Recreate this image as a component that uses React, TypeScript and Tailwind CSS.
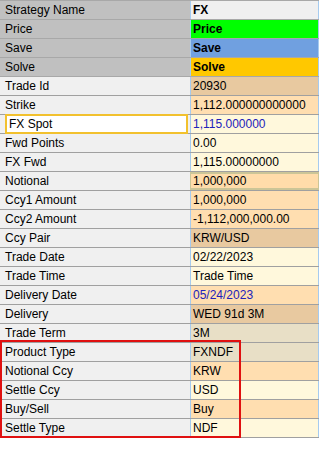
import React from 'react';

interface Row {
  label: string;
  value: string;
  bg: string;
  header?: boolean;
  bold?: boolean;
  blue?: boolean;
  focus?: boolean;
  edit?: boolean;
}

const ROWS: Row[] = [
  { label: 'Strategy Name', value: 'FX', bg: 'bg-[#f0f0f0]', header: true, bold: true },
  { label: 'Price', value: 'Price', bg: 'bg-[#00ff00]', header: true, bold: true },
  { label: 'Save', value: 'Save', bg: 'bg-[#70a0e0]', header: true, bold: true },
  { label: 'Solve', value: 'Solve', bg: 'bg-[#ffc800]', header: true, bold: true },
  { label: 'Trade Id', value: '20930', bg: 'bg-[#e8c9a0]' },
  { label: 'Strike', value: '1,112.000000000000', bg: 'bg-[#ffdeb0]' },
  { label: 'FX Spot', value: '1,115.000000', bg: 'bg-[#fff8dc]', blue: true, focus: true },
  { label: 'Fwd Points', value: '0.00', bg: 'bg-[#fff8dc]' },
  { label: 'FX Fwd', value: '1,115.00000000', bg: 'bg-[#fff8dc]' },
  { label: 'Notional', value: '1,000,000', bg: 'bg-[#ffdcaa]', edit: true },
  { label: 'Ccy1 Amount', value: '1,000,000', bg: 'bg-[#ffdeb0]' },
  { label: 'Ccy2 Amount', value: '-1,112,000,000.00', bg: 'bg-[#ffdeb0]' },
  { label: 'Ccy Pair', value: 'KRW/USD', bg: 'bg-[#e8c9a0]' },
  { label: 'Trade Date', value: '02/22/2023', bg: 'bg-[#fff8dc]' },
  { label: 'Trade Time', value: 'Trade Time', bg: 'bg-[#fff8dc]' },
  { label: 'Delivery Date', value: '05/24/2023', bg: 'bg-[#ffdeb0]', blue: true },
  { label: 'Delivery', value: 'WED 91d 3M', bg: 'bg-[#e8c9a0]' },
  { label: 'Trade Term', value: '3M', bg: 'bg-[#e8dfc6]' },
  { label: 'Product Type', value: 'FXNDF', bg: 'bg-[#e8dfc6]' },
  { label: 'Notional Ccy', value: 'KRW', bg: 'bg-[#ffdeb0]' },
  { label: 'Settle Ccy', value: 'USD', bg: 'bg-[#fff8dc]' },
  { label: 'Buy/Sell', value: 'Buy', bg: 'bg-[#ffdeb0]' },
  { label: 'Settle Type', value: 'NDF', bg: 'bg-[#fff8dc]' },
];

export default function App() {
  return (
    <div
      className="relative w-[319px] h-[452px] bg-white text-[12px] text-black overflow-hidden"
      style={{ fontFamily: '"Liberation Sans", Arial, sans-serif' }}
    >
      <div className="border-t border-[#a8a8a8]">
        {ROWS.map(row => (
          <div
            key={row.label}
            className={`flex h-[19px] border-b ${row.header ? 'border-[#a8a8a8]' : 'border-[#a0a0a0]'}`}
          >
            <div className={`w-[190px] flex items-center ${row.header ? 'bg-[#c0c0c0]' : 'bg-[#f0f0f0]'}`}>
              {row.focus ? (
                <div className="ml-[5px] w-[183px] h-[20px] -mt-[1px] flex items-center pl-[2px] bg-white border-2 border-[#f2c12e]">
                  {row.label}
                </div>
              ) : (
                <span className="pl-[5px]">{row.label}</span>
              )}
            </div>
            <div
              className={`flex-1 flex items-center pl-[2px] border-l border-r border-[#a6cbef] ${row.bg} ${
                row.edit ? 'border-2 border-[#cbc597]' : ''
              } ${row.bold ? 'font-bold' : ''} ${row.blue ? 'text-[#2222bb]' : ''}`}
            >
              {row.value}
            </div>
          </div>
        ))}
      </div>
      <div className="absolute left-0 top-[340px] w-[241px] h-[98px] border-2 border-[#e01010]" />
    </div>
  );
}
